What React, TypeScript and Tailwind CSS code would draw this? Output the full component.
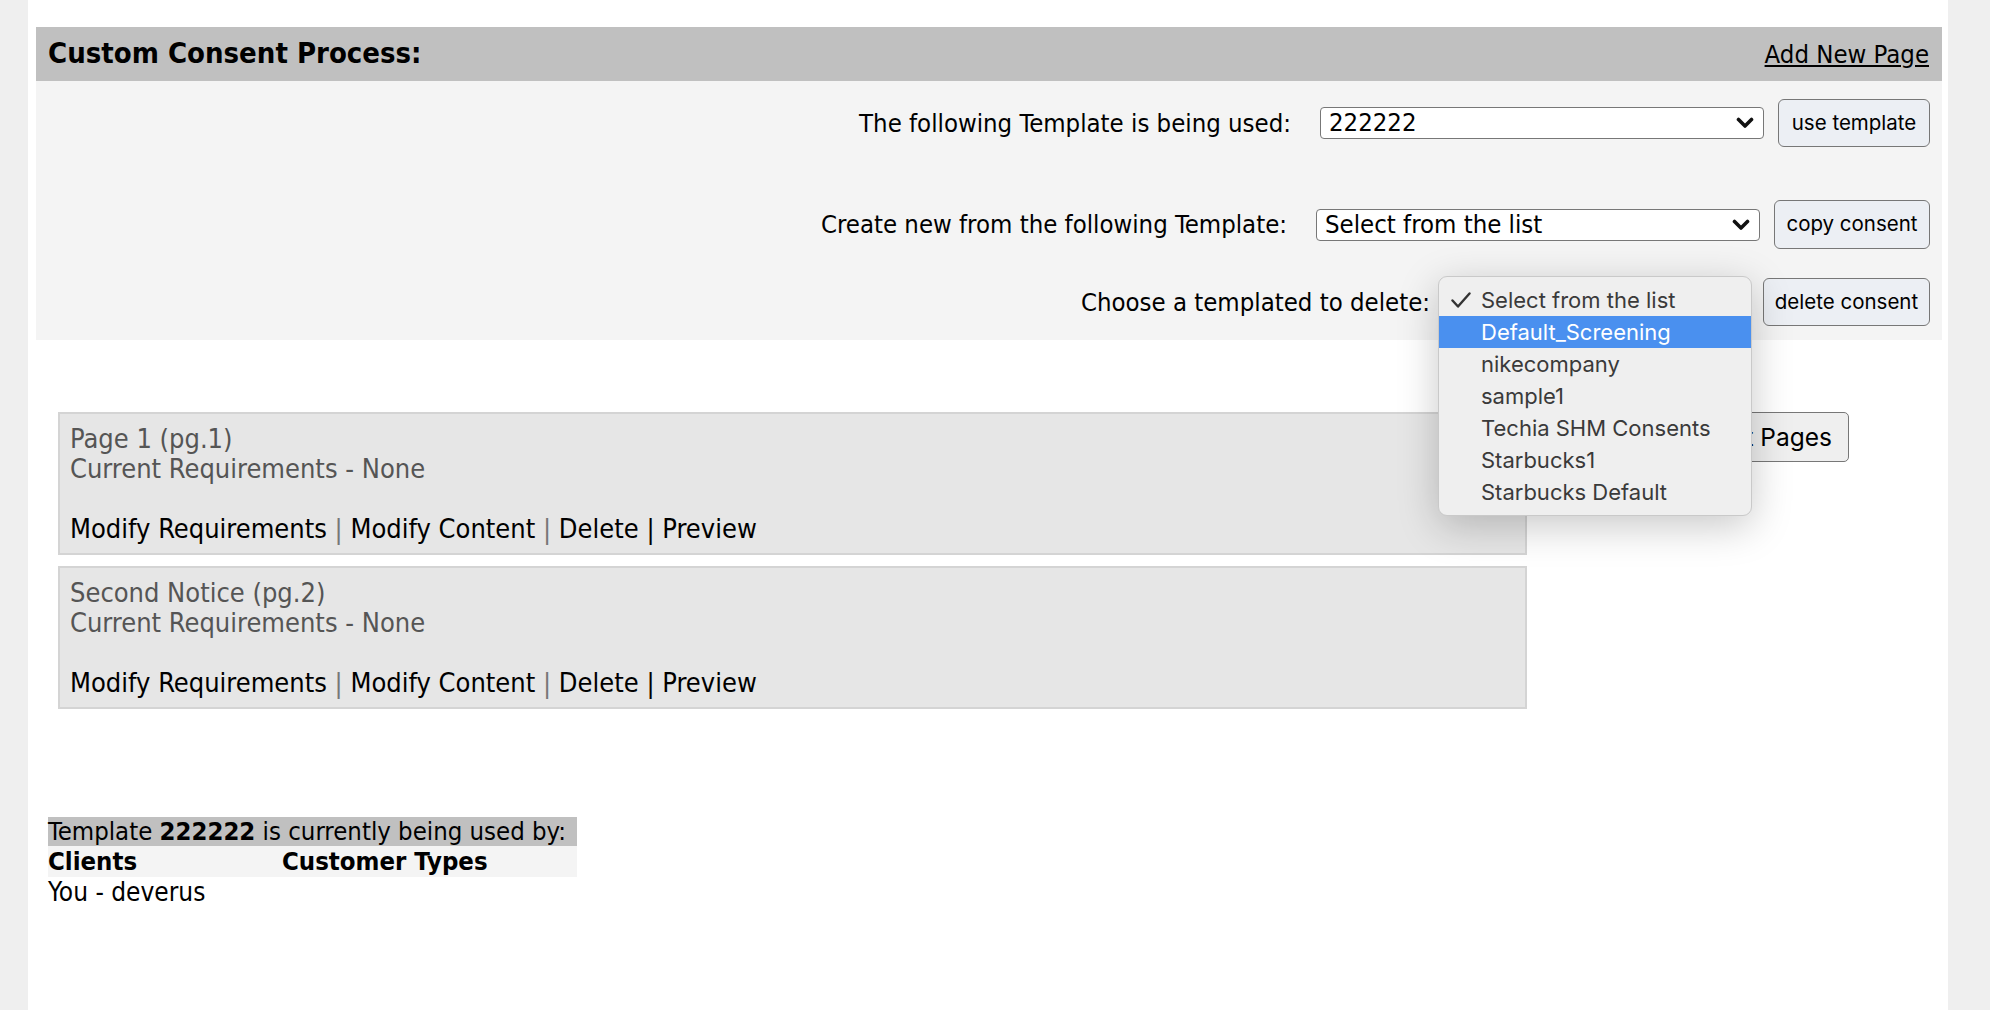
import React from "react";

const templates = [
  "Default_Screening",
  "nikecompany",
  "sample1",
  "Techia SHM Consents",
  "Starbucks1",
  "Starbucks Default",
];

const pages = [
  { title: "Page 1 (pg.1)", requirements: "None" },
  { title: "Second Notice (pg.2)", requirements: "None" },
];

const Chevron = () => (
  <svg width="18" height="12" viewBox="0 0 18 12">
    <path d="M2.5 2.5l6.5 6.5 6.5-6.5" stroke="#111" strokeWidth="3.6" fill="none" strokeLinecap="round" strokeLinejoin="round" />
  </svg>
);

const Check = () => (
  <svg width="20" height="16" viewBox="0 0 20 16">
    <path d="M1.5 8.5l5.5 6L18.5 1.5" stroke="#333" strokeWidth="2.4" fill="none" strokeLinecap="round" strokeLinejoin="round" />
  </svg>
);

const FakeSelect = ({ value, className }: { value?: string; className: string }) => (
  <div className={`flex h-[32px] items-center justify-between rounded-[4px] border-[1.5px] border-[#777] bg-white pl-[8px] pr-[9px] ${className}`}>
    <span className="text-[25.5px] leading-none text-black">{value}</span>
    <Chevron />
  </div>
);

const Btn = ({ label, className }: { label: string; className: string }) => (
  <button className={`flex items-center justify-center rounded-[6px] border-[1.5px] border-[#777] bg-[#eceff4] font-['Inter',sans-serif] text-[20.5px] text-black ${className}`}>
    {label}
  </button>
);

// native-style popup list, drawn open over the delete select
const TemplateMenu = () => (
  <div className="absolute left-[-21px] top-[-10px] z-10 w-[314px] rounded-[9px] border border-[#c9c9c9] bg-[#efefef] py-[7px] font-['Inter',sans-serif] text-[22px] text-[#3a3a3a] shadow-[0_10px_40px_rgba(0,0,0,0.22)]">
    <div className="flex h-[32px] items-center">
      <span className="flex w-[42px] justify-center pl-[2px]">
        <Check />
      </span>
      <span>Select from the list</span>
    </div>
    {templates.map((t, i) => (
      <div key={t} className={`flex h-[32px] items-center pl-[42px] ${i === 0 ? "bg-[#4a90ef] text-white" : ""}`}>
        {t}
      </div>
    ))}
  </div>
);

const PageCard = ({ title, requirements }: { title: string; requirements: string }) => (
  <div className="h-[143px] border-2 border-[#d4d4d4] bg-[#e6e6e6] px-[10px] pt-[10px] pb-[9px] text-[27px] leading-[30px]">
    <div className="text-[#555]">{title}</div>
    <div className="text-[#555]">Current Requirements - {requirements}</div>
    <div>&nbsp;</div>
    <div className="text-black">
      Modify Requirements <span className="text-[#777]">|</span> Modify Content <span className="text-[#777]">|</span> Delete{" "}
      <span className="text-black">|</span> Preview
    </div>
  </div>
);

export default function App() {
  return (
    <div className="min-h-[1010px] w-full bg-[#efefef] font-['DejaVu_Sans_Condensed','Open_Sans',sans-serif] text-[25.5px] text-black">
      <div className="ml-[28px] min-h-[1010px] w-[1920px] bg-white pt-[27px] pr-[6px] pl-[8px]">
        <div className="flex h-[54px] items-center justify-between bg-[#c0c0c0] pl-[12px] pr-[13px]">
          <h1 className="text-[29px] font-bold">Custom Consent Process:</h1>
          <a className="text-[25.5px] underline">Add New Page</a>
        </div>

        <div className="bg-[#f4f4f4] pt-[18px] pr-[12px] pb-[14px]">
          <div className="flex h-[48px] items-center justify-end">
            <span>The following Template is being used:</span>
            <FakeSelect value="222222" className="ml-[29px] w-[444px]" />
            <Btn label="use template" className="ml-[14px] h-[48px] w-[152px]" />
          </div>
          <div className="mt-[53px] flex h-[49px] items-center justify-end">
            <span>Create new from the following Template:</span>
            <FakeSelect value="Select from the list" className="ml-[29px] w-[444px]" />
            <Btn label="copy consent" className="ml-[14px] h-[49px] w-[156px]" />
          </div>
          <div className="mt-[29px] flex h-[48px] items-center justify-end">
            <span>Choose a templated to delete:</span>
            <div className="relative ml-[29px]">
              <FakeSelect className="w-[290px]" />
              <TemplateMenu />
            </div>
            <Btn label="delete consent" className="ml-[14px] h-[48px] w-[167px]" />
          </div>
        </div>

        <div className="mt-[72px] flex items-start pl-[22px]">
          <div className="flex w-[1469px] flex-col gap-[11px]">
            {pages.map((p) => (
              <PageCard key={p.title} {...p} />
            ))}
          </div>
          <button className="ml-auto mr-[93px] h-[50px] rounded-[5px] border-[1.5px] border-[#777] bg-[#efefef] px-[16px] font-['Inter',sans-serif] text-[24.5px]">
            Sort Pages
          </button>
        </div>

        <div className="mt-[108px] w-[541px] pl-[12px] text-[25.5px]">
          <div className="flex h-[29px] items-center whitespace-nowrap bg-[#c0c0c0]">
            Template&nbsp;<b>222222</b>&nbsp;is currently being used by:
          </div>
          <div className="flex h-[31px] items-center bg-[#f4f4f4] font-bold">
            <span className="w-[234px]">Clients</span>
            <span>Customer Types</span>
          </div>
          <div className="text-[26px] leading-[30px]">You - deverus</div>
        </div>
      </div>
    </div>
  );
}
